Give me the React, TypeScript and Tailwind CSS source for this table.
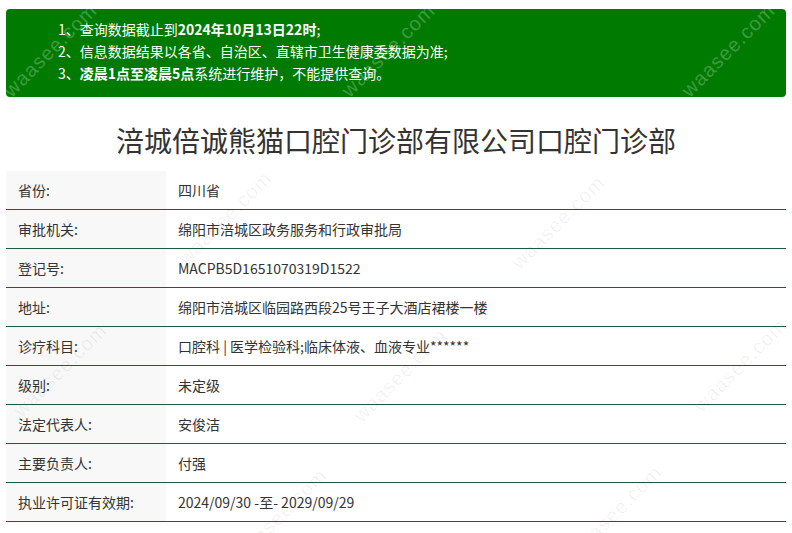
const notices = [
  {
    n: "1、",
    parts: [
      { t: "查询数据截止到", b: false },
      { t: "2024年10月13日22时", b: true },
      { t: ";", b: false },
    ],
  },
  { n: "2、", parts: [{ t: "信息数据结果以各省、自治区、直辖市卫生健康委数据为准;", b: false }] },
  {
    n: "3、",
    parts: [
      { t: "凌晨1点至凌晨5点", b: true },
      { t: "系统进行维护，不能提供查询。", b: false },
    ],
  },
];

const rows: [string, string][] = [
  ["省份:", "四川省"],
  ["审批机关:", "绵阳市涪城区政务服务和行政审批局"],
  ["登记号:", "MACPB5D1651070319D1522"],
  ["地址:", "绵阳市涪城区临园路西段25号王子大酒店裙楼一楼"],
  ["诊疗科目:", "口腔科 | 医学检验科;临床体液、血液专业******"],
  ["级别:", "未定级"],
  ["法定代表人:", "安俊洁"],
  ["主要负责人:", "付强"],
  ["执业许可证有效期:", "2024/09/30 -至- 2029/09/29"],
];

// faint site watermarks over the page
const marks = [
  { x: 50, y: 50, light: true },
  { x: 388, y: 50, light: true },
  { x: 728, y: 50, light: true },
  { x: 225, y: 218, light: false },
  { x: 558, y: 222, light: false },
  { x: 60, y: 370, light: false },
  { x: 400, y: 375, light: false },
  { x: 740, y: 365, light: false },
  { x: 280, y: 515, light: false },
  { x: 615, y: 512, light: false },
];

export default function App() {
  return (
    <div
      className="relative w-[792px] h-[533px] overflow-hidden bg-white text-[#333]"
      style={{ fontFamily: '"Noto Sans CJK SC", "Noto Sans", sans-serif' }}
    >
      <div className="px-[6px] pt-[9px]">
        {/* Notice box */}
        <div className="bg-[#007a00] rounded-[4px] h-[88px] pl-[52px] pt-[9px] text-white text-[14px] leading-[22px]">
          {notices.map((n) => (
            <p key={n.n}>
              {n.n}
              {n.parts.map((p, i) => (
                <span key={i} className={p.b ? "font-bold" : ""}>
                  {p.t}
                </span>
              ))}
            </p>
          ))}
        </div>

        <h1 className="text-[28px] leading-[40px] text-center text-[#333] mt-[23px] mb-[11px]">
          涪城倍诚熊猫口腔门诊部有限公司口腔门诊部
        </h1>

        {/* Info table */}
        <div className="flex flex-col">
          {rows.map(([k, v]) => (
            <div key={k} className="flex h-[39px] border-b border-[#1e5a3c] text-[14px]">
              <div className="w-[160px] bg-[#f8f8f8] pl-[12px] flex items-center">{k}</div>
              <div className="flex-1 pl-[12px] flex items-center">{v}</div>
            </div>
          ))}
        </div>
      </div>

      {marks.map((m, i) => (
        <span
          key={i}
          className={
            "pointer-events-none absolute -translate-x-1/2 -translate-y-1/2 -rotate-45 text-[20px] tracking-[1px] whitespace-nowrap " +
            (m.light ? "text-white/25" : "text-black/[0.06]")
          }
          style={{ left: m.x, top: m.y, fontFamily: "Arial, 'Liberation Sans', sans-serif" }}
        >
          waasee.com
        </span>
      ))}
    </div>
  );
}
